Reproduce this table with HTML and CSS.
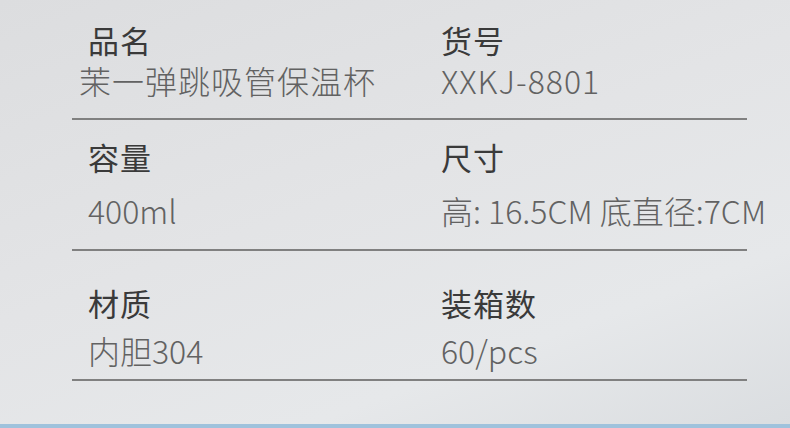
FILE: index.html
```html
<html>
<head>
<meta charset="utf-8">
<title>产品参数</title>
<link rel="stylesheet" href="styles.css">
</head>
<body>

    <div class="sheet">
        <div class="specs">
            <div class="row first">
                <div class="cell">
                    <div class="label">品名</div>
                    <div class="value name">茉一弹跳吸管保温杯</div>
                </div>
                <div class="cell">
                    <div class="label">货号</div>
                    <div class="value code">XXKJ-8801</div>
                </div>
            </div>
            <div class="row second">
                <div class="cell">
                    <div class="label">容量</div>
                    <div class="value">400ml</div>
                </div>
                <div class="cell">
                    <div class="label">尺寸</div>
                    <div class="value">高: 16.5CM 底直径:7CM</div>
                </div>
            </div>
            <div class="row last">
                <div class="cell">
                    <div class="label">材质</div>
                    <div class="value">内胆304</div>
                </div>
                <div class="cell">
                    <div class="label">装箱数</div>
                    <div class="value">60/pcs</div>
                </div>
            </div>
        </div>
        <div class="band"></div>
    </div>

</body>
</html>
```

FILE: styles.css
```css
/* Whole picture, fixed to the window */
body {
    margin: 0;
    font-family: "Noto Sans CJK SC", "Noto Sans", sans-serif;
}

.sheet {
    width: 790px;
    height: 428px;
    display: flex;
    flex-direction: column;
    background: linear-gradient(160deg, #dcdddf 0%, #e3e4e6 45%, #e6e8ea 75%, #dadde0 100%);
    overflow: hidden;
}

.specs {
    flex: 1;
    width: 675px;
    margin-left: 72px;
}

/* One row = two columns and a rule under it */
.row {
    display: grid;
    grid-template-columns: 369px 1fr;
    height: 130px;
    border-bottom: 2px solid #808080;
    box-sizing: border-box;
}

.row.first {
    height: 120px;
}

.row.second {
    height: 131px;
}

.cell {
    padding-left: 16px;
    white-space: nowrap;
}

.cell + .cell {
    padding-left: 0;
}

.label {
    font-size: 31px;
    line-height: 34px;
    font-weight: 400;
    letter-spacing: 1px;
    color: #3a3a3a;
}

/* thin face for the values, if one is installed */
.value {
    font-family: "Noto Sans CJK SC Light", "Noto Sans CJK SC DemiLight", "Noto Sans CJK SC", sans-serif;
    font-size: 32px;
    line-height: 34px;
    font-weight: 300;
    color: #626262;
}

.first .cell {
    padding-top: 23px;
}

.first .value {
    margin-top: 6px;
}

.second .cell {
    padding-top: 20px;
}

.second .value {
    margin-top: 19px;
}

.last .cell {
    padding-top: 35px;
}

.last .value {
    margin-top: 13px;
}

.name {
    margin-left: -9px;
    letter-spacing: 1px;
}

.code {
    letter-spacing: 1px;
}

.band {
    height: 4px;
    background: #9fc2dc;
}
```
